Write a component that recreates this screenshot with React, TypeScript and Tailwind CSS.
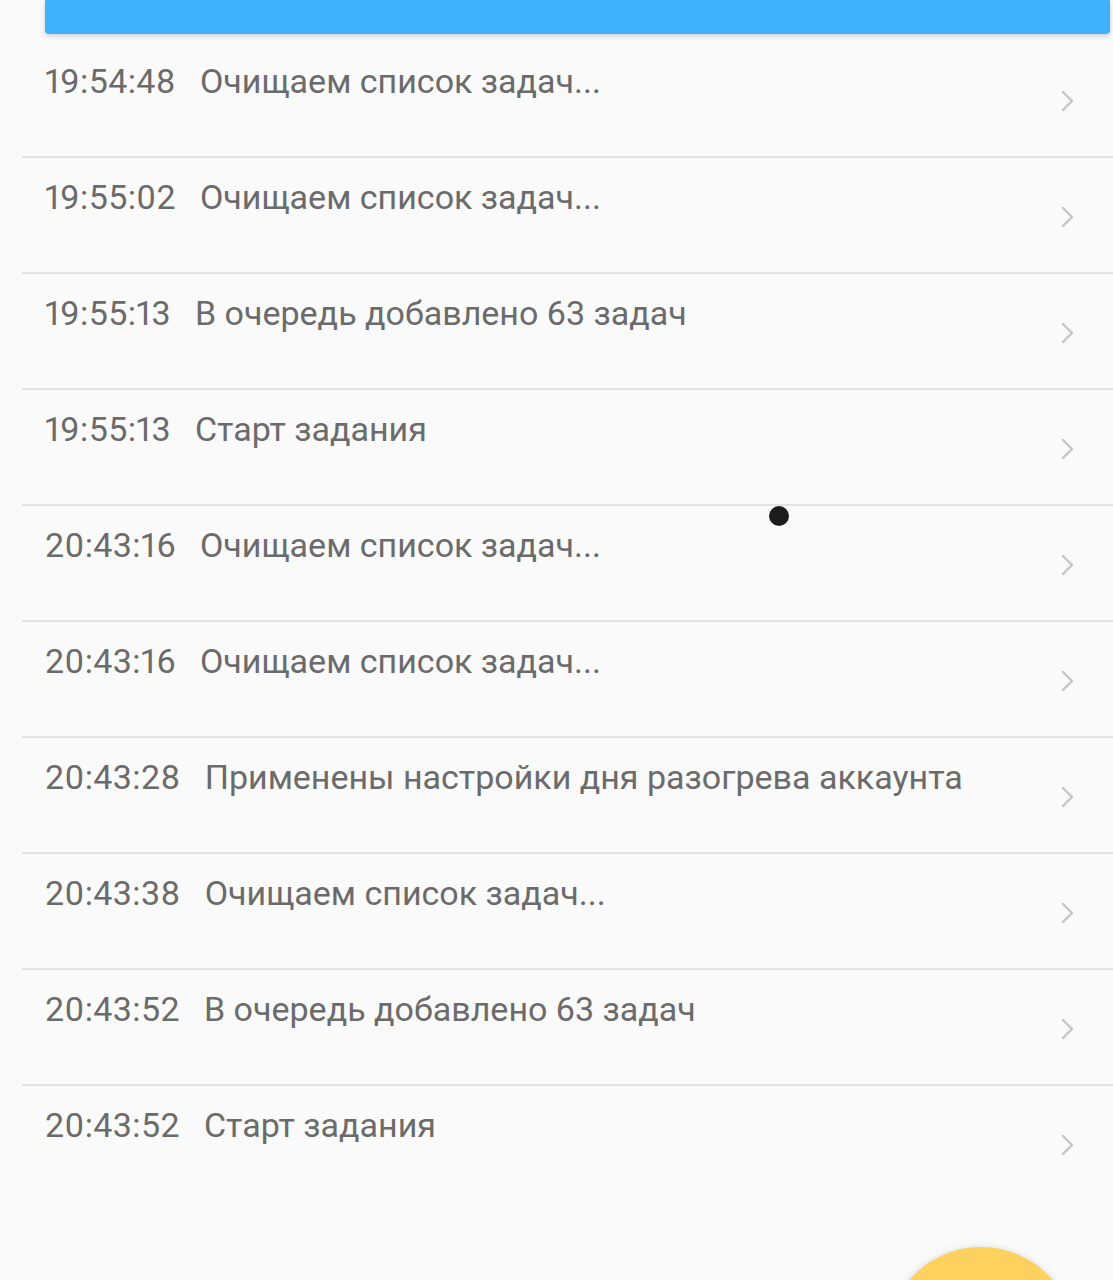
const entries: { time: string; text: string }[] = [
  { time: "19:54:48", text: "Очищаем список задач..." },
  { time: "19:55:02", text: "Очищаем список задач..." },
  { time: "19:55:13", text: "В очередь добавлено 63 задач" },
  { time: "19:55:13", text: "Старт задания" },
  { time: "20:43:16", text: "Очищаем список задач..." },
  { time: "20:43:16", text: "Очищаем список задач..." },
  { time: "20:43:28", text: "Применены настройки дня разогрева аккаунта" },
  { time: "20:43:38", text: "Очищаем список задач..." },
  { time: "20:43:52", text: "В очередь добавлено 63 задач" },
  { time: "20:43:52", text: "Старт задания" },
];

function Chevron() {
  return (
    <svg width="14" height="22" viewBox="0 0 14 22" fill="none" className="shrink-0">
      <path d="M2 2l9 9-9 9" stroke="#c4c4c4" strokeWidth="2.4" strokeLinecap="round" strokeLinejoin="round" />
    </svg>
  );
}

export default function App() {
  return (
    <div
      className="relative h-[1280px] w-full overflow-hidden bg-[#fafafa]"
      style={{ fontFamily: "Roboto, 'Noto Sans', sans-serif" }}
    >
      <div className="ml-[45px] mr-[3px] h-[34px] rounded-b-[4px] bg-[#40b1fc] shadow-[0_2px_5px_rgba(0,0,0,0.18)]" />

      <ul className="ml-[22px] mt-[8px]">
        {entries.map((e, i) => (
          <li
            key={i}
            className={`flex h-[116px] items-start justify-between pl-[23px] pr-[38px] ${
              i < entries.length - 1 ? "border-b-2 border-[#e2e2e2]" : ""
            }`}
          >
            <div className="mt-[19px] flex items-baseline gap-[24px] text-[34px] leading-[40px] text-[#6b6b6b]">
              <span className="proportional-nums tracking-[0.4px]">{e.time}</span>
              <span>{e.text}</span>
            </div>
            <div className="mt-[48px]">
              <Chevron />
            </div>
          </li>
        ))}
      </ul>

      <div className="absolute left-[769px] top-[506px] h-[20px] w-[20px] rounded-full bg-[#1c1c1c]" />
      <div className="absolute left-[887px] top-[1247px] h-[188px] w-[188px] rounded-full bg-[#fdd15e] shadow-[0_2px_8px_rgba(0,0,0,0.2)]" />
    </div>
  );
}
